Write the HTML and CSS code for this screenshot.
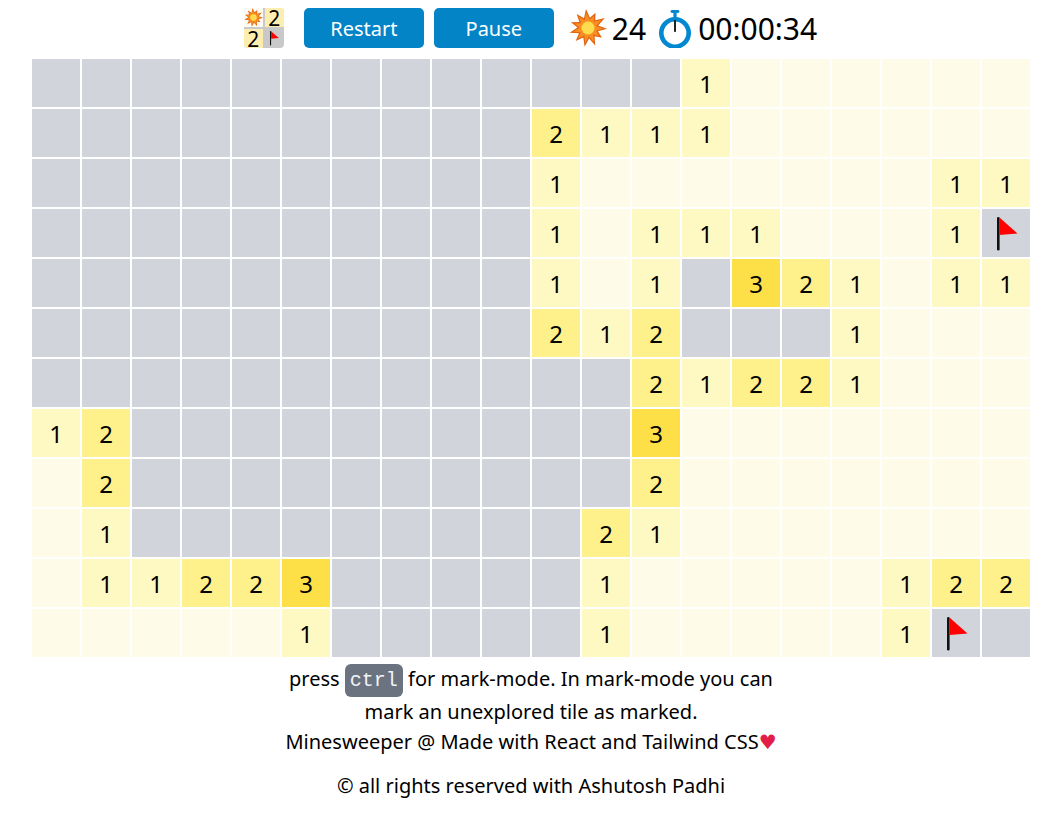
FILE: index.html
```html
<!DOCTYPE html>
<html lang="en">
<head>
  <meta charset="UTF-8" />
  <meta name="viewport" content="width=device-width, initial-scale=1.0" />
  <title>Minesweeper</title>
  <link rel="stylesheet" href="styles.css">
</head>
<body>
  <svg class="defs" width="0" height="0" aria-hidden="true">
    <defs>
      <polygon id="star" points="17,0 20.9,8.7 26.6,3.8 26.2,11.3 35.8,9.1 29.2,16.4 38,19.7 29,22.3 32.9,28.7 25.6,27.2 26.2,36.6 20.1,29.4 15.6,37.7 14.3,28.4 6.7,32.1 10,24.3 0.6,23.7 8.5,18.6 1.9,13.3 10.4,13 7.7,5 15,9.3" />
      <g id="burst">
        <use href="#star" fill="#e2640f" />
        <use href="#star" fill="#f98f24" transform="translate(19 19) scale(0.8) translate(-19 -19)" />
        <circle cx="19" cy="19" r="6.5" fill="#ffdc4e" />
      </g>
      <g id="flag">
        <rect x="15" y="8" width="2.6" height="33.5" rx="1.2" fill="#111" />
        <polygon points="17.5,8.5 35.5,24.5 17.5,26" fill="#ff0000" />
      </g>
    </defs>
  </svg>

  <header class="topbar">
    <div class="logo">
      <span class="logo-cell logo-burst"><svg width="19" height="19" viewBox="0 0 38 38"><use href="#burst" /></svg></span>
      <span class="logo-cell logo-num logo-tr">2</span>
      <span class="logo-cell logo-num logo-bl">2</span>
      <span class="logo-cell logo-flag"><svg width="19" height="19" viewBox="3.4 3.4 44.2 44.2"><use href="#flag" /></svg></span>
    </div>
    <button class="btn">Restart</button>
    <button class="btn">Pause</button>
    <svg class="burst-icon" width="38" height="38" viewBox="0 0 38 38"><use href="#burst" /></svg>
    <span class="counter">24</span>
    <svg class="watch-icon" width="34" height="40" viewBox="0 0 34 40">
      <rect x="12.6" y="2" width="8.8" height="3" rx="1.4" fill="#0288d1" />
      <rect x="15.4" y="4" width="3.2" height="6" fill="#0288d1" />
      <circle cx="17" cy="25" r="13.7" fill="none" stroke="#0288d1" stroke-width="4.6" />
      <rect x="16" y="12" width="2" height="11.8" fill="#222" />
    </svg>
    <span class="timer">00:00:34</span>
  </header>

  <main class="board">
    <div class="tile"></div><div class="tile"></div><div class="tile"></div><div class="tile"></div><div class="tile"></div><div class="tile"></div><div class="tile"></div><div class="tile"></div><div class="tile"></div><div class="tile"></div><div class="tile"></div><div class="tile"></div><div class="tile"></div><div class="tile n1">1</div><div class="tile n0"></div><div class="tile n0"></div><div class="tile n0"></div><div class="tile n0"></div><div class="tile n0"></div><div class="tile n0"></div>
    <div class="tile"></div><div class="tile"></div><div class="tile"></div><div class="tile"></div><div class="tile"></div><div class="tile"></div><div class="tile"></div><div class="tile"></div><div class="tile"></div><div class="tile"></div><div class="tile n2">2</div><div class="tile n1">1</div><div class="tile n1">1</div><div class="tile n1">1</div><div class="tile n0"></div><div class="tile n0"></div><div class="tile n0"></div><div class="tile n0"></div><div class="tile n0"></div><div class="tile n0"></div>
    <div class="tile"></div><div class="tile"></div><div class="tile"></div><div class="tile"></div><div class="tile"></div><div class="tile"></div><div class="tile"></div><div class="tile"></div><div class="tile"></div><div class="tile"></div><div class="tile n1">1</div><div class="tile n0"></div><div class="tile n0"></div><div class="tile n0"></div><div class="tile n0"></div><div class="tile n0"></div><div class="tile n0"></div><div class="tile n0"></div><div class="tile n1">1</div><div class="tile n1">1</div>
    <div class="tile"></div><div class="tile"></div><div class="tile"></div><div class="tile"></div><div class="tile"></div><div class="tile"></div><div class="tile"></div><div class="tile"></div><div class="tile"></div><div class="tile"></div><div class="tile n1">1</div><div class="tile n0"></div><div class="tile n1">1</div><div class="tile n1">1</div><div class="tile n1">1</div><div class="tile n0"></div><div class="tile n0"></div><div class="tile n0"></div><div class="tile n1">1</div><div class="tile"><svg width="48" height="48" viewBox="0 0 48 48"><use href="#flag" /></svg></div>
    <div class="tile"></div><div class="tile"></div><div class="tile"></div><div class="tile"></div><div class="tile"></div><div class="tile"></div><div class="tile"></div><div class="tile"></div><div class="tile"></div><div class="tile"></div><div class="tile n1">1</div><div class="tile n0"></div><div class="tile n1">1</div><div class="tile"></div><div class="tile n3">3</div><div class="tile n2">2</div><div class="tile n1">1</div><div class="tile n0"></div><div class="tile n1">1</div><div class="tile n1">1</div>
    <div class="tile"></div><div class="tile"></div><div class="tile"></div><div class="tile"></div><div class="tile"></div><div class="tile"></div><div class="tile"></div><div class="tile"></div><div class="tile"></div><div class="tile"></div><div class="tile n2">2</div><div class="tile n1">1</div><div class="tile n2">2</div><div class="tile"></div><div class="tile"></div><div class="tile"></div><div class="tile n1">1</div><div class="tile n0"></div><div class="tile n0"></div><div class="tile n0"></div>
    <div class="tile"></div><div class="tile"></div><div class="tile"></div><div class="tile"></div><div class="tile"></div><div class="tile"></div><div class="tile"></div><div class="tile"></div><div class="tile"></div><div class="tile"></div><div class="tile"></div><div class="tile"></div><div class="tile n2">2</div><div class="tile n1">1</div><div class="tile n2">2</div><div class="tile n2">2</div><div class="tile n1">1</div><div class="tile n0"></div><div class="tile n0"></div><div class="tile n0"></div>
    <div class="tile n1">1</div><div class="tile n2">2</div><div class="tile"></div><div class="tile"></div><div class="tile"></div><div class="tile"></div><div class="tile"></div><div class="tile"></div><div class="tile"></div><div class="tile"></div><div class="tile"></div><div class="tile"></div><div class="tile n3">3</div><div class="tile n0"></div><div class="tile n0"></div><div class="tile n0"></div><div class="tile n0"></div><div class="tile n0"></div><div class="tile n0"></div><div class="tile n0"></div>
    <div class="tile n0"></div><div class="tile n2">2</div><div class="tile"></div><div class="tile"></div><div class="tile"></div><div class="tile"></div><div class="tile"></div><div class="tile"></div><div class="tile"></div><div class="tile"></div><div class="tile"></div><div class="tile"></div><div class="tile n2">2</div><div class="tile n0"></div><div class="tile n0"></div><div class="tile n0"></div><div class="tile n0"></div><div class="tile n0"></div><div class="tile n0"></div><div class="tile n0"></div>
    <div class="tile n0"></div><div class="tile n1">1</div><div class="tile"></div><div class="tile"></div><div class="tile"></div><div class="tile"></div><div class="tile"></div><div class="tile"></div><div class="tile"></div><div class="tile"></div><div class="tile"></div><div class="tile n2">2</div><div class="tile n1">1</div><div class="tile n0"></div><div class="tile n0"></div><div class="tile n0"></div><div class="tile n0"></div><div class="tile n0"></div><div class="tile n0"></div><div class="tile n0"></div>
    <div class="tile n0"></div><div class="tile n1">1</div><div class="tile n1">1</div><div class="tile n2">2</div><div class="tile n2">2</div><div class="tile n3">3</div><div class="tile"></div><div class="tile"></div><div class="tile"></div><div class="tile"></div><div class="tile"></div><div class="tile n1">1</div><div class="tile n0"></div><div class="tile n0"></div><div class="tile n0"></div><div class="tile n0"></div><div class="tile n0"></div><div class="tile n1">1</div><div class="tile n2">2</div><div class="tile n2">2</div>
    <div class="tile n0"></div><div class="tile n0"></div><div class="tile n0"></div><div class="tile n0"></div><div class="tile n0"></div><div class="tile n1">1</div><div class="tile"></div><div class="tile"></div><div class="tile"></div><div class="tile"></div><div class="tile"></div><div class="tile n1">1</div><div class="tile n0"></div><div class="tile n0"></div><div class="tile n0"></div><div class="tile n0"></div><div class="tile n0"></div><div class="tile n1">1</div><div class="tile"><svg width="48" height="48" viewBox="0 0 48 48"><use href="#flag" /></svg></div><div class="tile"></div>
  </main>

  <footer class="notes">
    <p class="help">press <kbd>ctrl</kbd> for mark-mode. In mark-mode you can<br>mark an unexplored tile as marked.</p>
    <p class="made">Minesweeper @ Made with React and Tailwind CSS<span class="heart">♥</span></p>
    <p class="rights">© all rights reserved with Ashutosh Padhi</p>
  </footer>
</body>
</html>
```

FILE: styles.css
```css
body {
  margin: 0;
  font-family: 'Noto Sans', sans-serif;
  background-color: #fff;
  color: #000;
}
.defs {
  position: absolute;
}
.topbar {
  display: flex;
  align-items: center;
  justify-content: center;
  height: 40px;
  padding: 8px 2px 11px 0;
}
.logo {
  display: grid;
  grid-template-columns: 19px 19px;
  grid-auto-rows: 19px;
  gap: 2px;
  margin-right: 20px;
  border-radius: 4px;
  background: #c9c9c9;
}
.logo-cell {
  display: flex;
  align-items: center;
  justify-content: center;
}
.logo-burst {
  border-top-left-radius: 4px;
  background: #fdfbf3;
}
.logo-num {
  background: #fdeeb0;
  font-size: 21px;
}
.logo-tr {
  border-top-right-radius: 4px;
}
.logo-bl {
  border-bottom-left-radius: 4px;
}
.btn {
  width: 120px;
  height: 40px;
  margin-right: 10px;
  border: 0;
  border-radius: 5px;
  background: #0284c7;
  color: #fff;
  font-family: inherit;
  font-size: 20px;
}
.burst-icon {
  margin-left: 5px;
}
.counter {
  margin-left: 5px;
  font-size: 30px;
}
.watch-icon {
  margin-left: 12px;
}
.timer {
  margin-left: 6px;
  font-size: 30px;
}
.board {
  display: grid;
  grid-template-columns: repeat(20, 48px);
  grid-auto-rows: 48px;
  gap: 2px;
  width: 998px;
  margin-left: 32px;
}
.tile {
  display: flex;
  align-items: center;
  justify-content: center;
  background: #d1d5db;
  font-size: 24px;
}
.n0 {
  background: #fefce8;
}
.n1 {
  background: #fef9c3;
}
.n2 {
  background: #fef08a;
}
.n3 {
  background: #fde047;
}
.notes {
  width: 530px;
  margin: 5px 0 0 266px;
  text-align: center;
  font-size: 20px;
}
.notes p {
  margin: 0;
}
.help {
  line-height: 33px;
}
kbd {
  display: inline-block;
  margin: -6px 0;
  padding: 0 5px;
  border-radius: 6px;
  background: #6b7280;
  color: #f3f4f6;
  font-family: 'Liberation Mono', monospace;
  font-size: 20px;
  line-height: 33px;
}
.made {
  line-height: 28px;
}
.heart {
  font-family: 'DejaVu Sans', sans-serif;
  line-height: 20px;
  color: #e11d48;
}
.notes .rights {
  margin-top: 15px;
  line-height: 30px;
}
```
